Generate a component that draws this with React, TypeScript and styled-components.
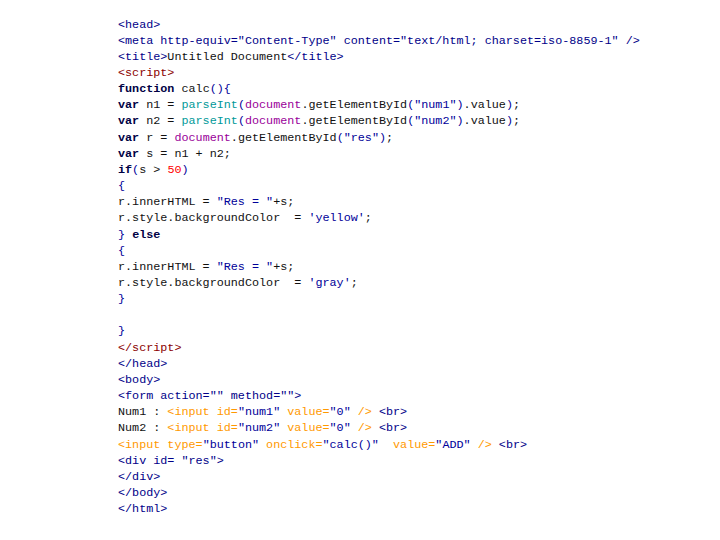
import React from "react";
import styled, { createGlobalStyle } from "styled-components";

const Global = createGlobalStyle`
  html, body { margin: 0; padding: 0; background: #ffffff; }
`;

type Kind = "tag" | "script" | "plain" | "kw" | "str" | "fn" | "obj" | "num" | "punc" | "input";

const colors: Record<Kind, string> = {
  tag: "#000088",
  script: "#8b0000",
  plain: "#111111",
  kw: "#000044",
  str: "#000099",
  fn: "#009999",
  obj: "#990099",
  num: "#ff0000",
  punc: "#000099",
  input: "#ff9900",
};

const Page = styled.div`
  width: 720px;
  height: 540px;
  box-sizing: border-box;
  padding: 16.5px 0 0 118px;
  background: #ffffff;
  overflow: hidden;
`;

const Code = styled.div`
  font-family: "Liberation Mono", "Courier New", monospace;
  font-size: 11.75px;
  line-height: 16.17px;
  color: #000;
`;

const Line = styled.div`
  white-space: pre;
  height: 16.17px;
`;

const Tok = styled.span<{ $kind: Kind }>`
  color: ${(p) => colors[p.$kind]};
  font-weight: ${(p) => (p.$kind === "kw" ? 700 : 400)};
`;

type T = [Kind, string];

const getById = (id: string): T[] => [
  ["fn", "parseInt"],
  ["punc", "("],
  ["obj", "document"],
  ["plain", ".getElementById"],
  ["punc", "("],
  ["str", `"${id}"`],
  ["punc", ")"],
  ["plain", ".value"],
  ["punc", ")"],
  ["plain", ";"],
];

const inputLine = (label: string, id: string): T[] => [
  ["plain", `${label} : `],
  ["input", "<input id="],
  ["str", `"${id}"`],
  ["input", " value="],
  ["str", `"0"`],
  ["input", " />"],
  ["plain", " "],
  ["tag", "<br>"],
];

const lines: T[][] = [
  [["tag", "<head>"]],
  [["tag", `<meta http-equiv="Content-Type" content="text/html; charset=iso-8859-1" />`]],
  [["tag", "<title>"], ["plain", "Untitled Document"], ["tag", "</title>"]],
  [["script", "<script>"]],
  [["kw", "function"], ["plain", " calc"], ["punc", "(){"]],
  [["kw", "var"], ["plain", " n1 = "], ...getById("num1")],
  [["kw", "var"], ["plain", " n2 = "], ...getById("num2")],
  [
    ["kw", "var"],
    ["plain", " r = "],
    ["obj", "document"],
    ["plain", ".getElementById"],
    ["punc", "("],
    ["str", `"res"`],
    ["punc", ")"],
    ["plain", ";"],
  ],
  [["kw", "var"], ["plain", " s = n1 + n2;"]],
  [["kw", "if"], ["punc", "("], ["plain", "s > "], ["num", "50"], ["punc", ")"]],
  [["punc", "{"]],
  [["plain", "r.innerHTML = "], ["str", `"Res = "`], ["plain", "+s;"]],
  [["plain", "r.style.backgroundColor  = "], ["str", "'yellow'"], ["plain", ";"]],
  [["punc", "}"], ["plain", " "], ["kw", "else"]],
  [["punc", "{"]],
  [["plain", "r.innerHTML = "], ["str", `"Res = "`], ["plain", "+s;"]],
  [["plain", "r.style.backgroundColor  = "], ["str", "'gray'"], ["plain", ";"]],
  [["punc", "}"]],
  [],
  [["punc", "}"]],
  [["script", "</script>"]],
  [["tag", "</head>"]],
  [["tag", "<body>"]],
  [["tag", `<form action="" method="">`]],
  inputLine("Num1", "num1"),
  inputLine("Num2", "num2"),
  [
    ["input", "<input type="],
    ["str", `"button"`],
    ["input", " onclick="],
    ["str", `"calc()"`],
    ["input", "  value="],
    ["str", `"ADD"`],
    ["input", " />"],
    ["plain", " "],
    ["tag", "<br>"],
  ],
  [["tag", `<div id= "res">`]],
  [["tag", "</div>"]],
  [["tag", "</body>"]],
  [["tag", "</html>"]],
];

export default function App() {
  return (
    <>
      <Global />
      <Page>
        <Code>
          {lines.map((toks, i) => (
            <Line key={i}>
              {toks.map(([k, t], j) => (
                <Tok key={j} $kind={k}>
                  {t}
                </Tok>
              ))}
            </Line>
          ))}
        </Code>
      </Page>
    </>
  );
}
